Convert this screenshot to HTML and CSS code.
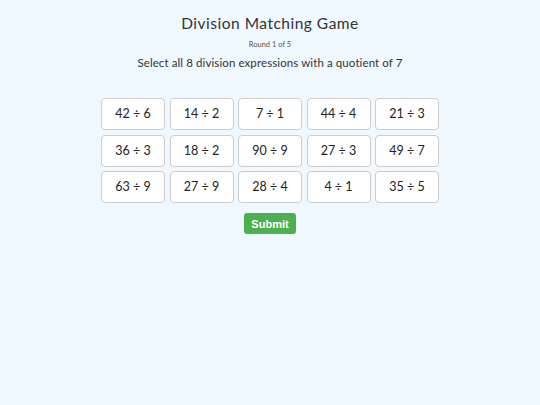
FILE: index.html
```html
<!DOCTYPE html>
<html lang="en">
<head>
    <meta charset="UTF-8">
    <title>Division Matching Game</title>
    <link rel="stylesheet" href="styles.css">
</head>
<body>
    <h1>Division Matching Game</h1>
    <div class="round">Round 1 of 5</div>
    <p class="prompt">Select all 8 division expressions with a quotient of 7</p>
    <div id="cardGrid">
        <div class="card">42 ÷ 6</div>
        <div class="card">14 ÷ 2</div>
        <div class="card">7 ÷ 1</div>
        <div class="card">44 ÷ 4</div>
        <div class="card">21 ÷ 3</div>
        <div class="card">36 ÷ 3</div>
        <div class="card">18 ÷ 2</div>
        <div class="card">90 ÷ 9</div>
        <div class="card">27 ÷ 3</div>
        <div class="card">49 ÷ 7</div>
        <div class="card">63 ÷ 9</div>
        <div class="card">27 ÷ 9</div>
        <div class="card">28 ÷ 4</div>
        <div class="card">4 ÷ 1</div>
        <div class="card">35 ÷ 5</div>
    </div>
    <button class="submitBtn">Submit</button>
</body>
</html>
```

FILE: styles.css
```css
body {
    margin: 0;
    padding-top: 12px;
    text-align: center;
    font-family: Lato, 'Noto Sans', sans-serif;
    color: #333;
    background-color: #f0f8ff;
}
h1 {
    font-size: 15.5px;
    font-weight: 400;
    margin: 0 0 6px 0;
    line-height: 22px;
    letter-spacing: 0.5px;
}
.round {
    font-size: 7.5px;
    color: #555;
    line-height: 10px;
}
.prompt {
    font-size: 11.5px;
    margin: 5px 0 0 0;
    line-height: 16px;
    letter-spacing: 0.1px;
}
#cardGrid {
    display: grid;
    grid-template-columns: repeat(5, 64px);
    gap: 4.5px;
    justify-content: center;
    margin-top: 27px;
}
.card {
    height: 30px;
    line-height: 30px;
    background-color: white;
    border: 1px solid #ccc;
    border-radius: 4px;
    font-size: 12.5px;
    color: #222;
}
.submitBtn {
    margin-top: 10px;
    width: 52px;
    height: 21px;
    padding: 0;
    border: none;
    border-radius: 3px;
    background-color: #4caf50;
    color: white;
    font-family: 'Liberation Sans', Arial, sans-serif;
    font-weight: bold;
    font-size: 11px;
}
```
